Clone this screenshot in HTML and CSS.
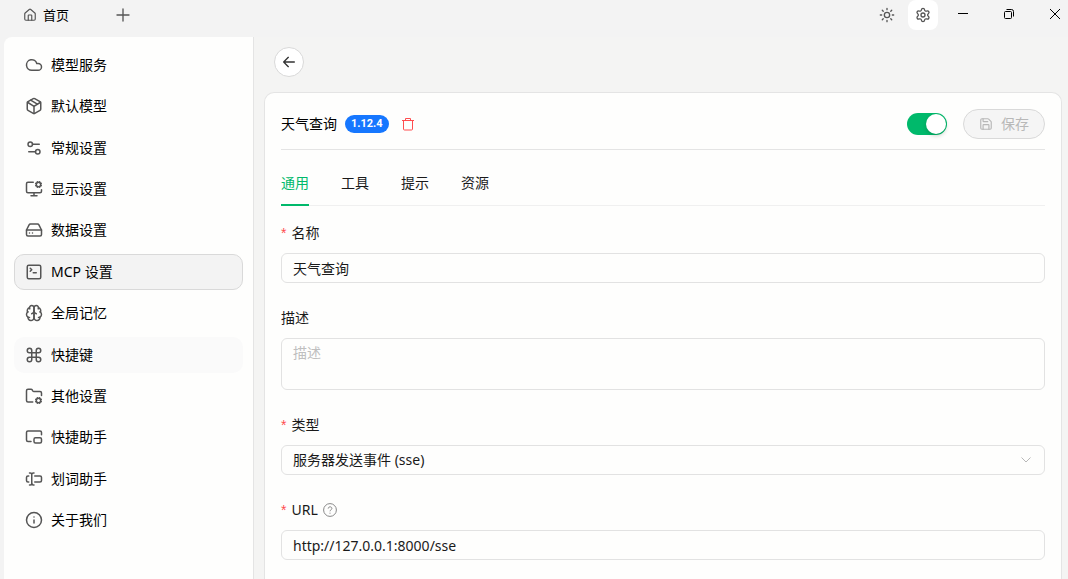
FILE: index.html
```html
<!DOCTYPE html>
<html lang="zh-CN">
<head>
    <meta charset="UTF-8">
    <meta name="viewport" content="width=device-width, initial-scale=1.0">
    <title>MCP 设置</title>
    <link rel="stylesheet" href="styles.css">
</head>
<body>
    <header class="titlebar">
        <a class="home-tab" href="#">
            <svg class="icon icon-sm" viewBox="0 0 24 24"><path d="M15 21v-8a1 1 0 0 0-1-1h-4a1 1 0 0 0-1 1v8"/><path d="M3 10a2 2 0 0 1 .709-1.528l7-5.999a2 2 0 0 1 2.582 0l7 5.999A2 2 0 0 1 21 10v9a2 2 0 0 1-2 2H5a2 2 0 0 1-2-2z"/></svg>
            首页
        </a>
        <button class="add-tab" type="button" aria-label="新建标签">
            <svg class="icon" viewBox="0 0 24 24"><path d="M3 12h18M12 3v18"/></svg>
        </button>
        <div class="tools">
            <button class="tool" type="button" aria-label="主题">
                <svg class="icon" viewBox="0 0 24 24"><circle cx="12" cy="12" r="4"/><path d="M12 2v2M12 20v2M4.93 4.93l1.41 1.41M17.66 17.66l1.41 1.41M2 12h2M20 12h2M6.34 17.66l-1.41 1.41M19.07 4.93l-1.41 1.41"/></svg>
            </button>
            <button class="tool active" type="button" aria-label="设置">
                <svg class="icon" viewBox="0 0 24 24"><path d="M9.671 4.136a2.34 2.34 0 0 1 4.659 0 2.34 2.34 0 0 0 3.319 1.915 2.34 2.34 0 0 1 2.33 4.033 2.34 2.34 0 0 0 0 3.831 2.34 2.34 0 0 1-2.33 4.033 2.34 2.34 0 0 0-3.319 1.915 2.34 2.34 0 0 1-4.659 0 2.34 2.34 0 0 0-3.32-1.915 2.34 2.34 0 0 1-2.33-4.033 2.34 2.34 0 0 0 0-3.831A2.34 2.34 0 0 1 6.35 6.051a2.34 2.34 0 0 0 3.319-1.915"/><circle cx="12" cy="12" r="3"/></svg>
            </button>
        </div>
        <div class="window-controls">
            <button type="button" aria-label="最小化"><svg viewBox="0 0 12 12"><path d="M1 5.5h10"/></svg></button>
            <button type="button" aria-label="还原"><svg viewBox="0 0 12 12"><rect x="1.5" y="3.5" width="7" height="7" rx="1"/><path d="M3.5 1.5h5a2 2 0 0 1 2 2v5"/></svg></button>
            <button type="button" aria-label="关闭"><svg viewBox="0 0 12 12"><path d="M1 1l10 10M11 1L1 11"/></svg></button>
        </div>
    </header>

    <div class="layout">
        <nav class="sidebar">
            <ul class="menu">
                <li><a class="menu-item" href="#">
                    <svg class="icon" viewBox="0 0 24 24"><path d="M17.5 19H9a7 7 0 1 1 6.71-9h1.79a4.5 4.5 0 1 1 0 9Z"/></svg>
                    模型服务</a></li>
                <li><a class="menu-item" href="#">
                    <svg class="icon" viewBox="0 0 24 24"><path d="M11 21.73a2 2 0 0 0 2 0l7-4A2 2 0 0 0 21 16V8a2 2 0 0 0-1-1.73l-7-4a2 2 0 0 0-2 0l-7 4A2 2 0 0 0 3 8v8a2 2 0 0 0 1 1.73z"/><path d="M12 22V12"/><path d="m3.3 7 7.703 4.734a2 2 0 0 0 1.994 0L20.7 7"/><path d="m7.5 4.27 9 5.15"/></svg>
                    默认模型</a></li>
                <li><a class="menu-item" href="#">
                    <svg class="icon" viewBox="0 0 24 24"><path d="M14 17H5M19 7h-9"/><circle cx="17" cy="17" r="3"/><circle cx="7" cy="7" r="3"/></svg>
                    常规设置</a></li>
                <li><a class="menu-item" href="#">
                    <svg class="icon" viewBox="0 0 24 24"><path d="M12 17v4M8 21h8"/><path d="m14.305 7.53.923-.382M15.228 4.852l-.923-.383M16.852 3.228l-.383-.924M16.852 8.772l-.383.923M19.148 3.228l.383-.924M19.53 9.696l-.382-.924M20.772 4.852l.924-.383M20.772 7.148l.924.383"/><path d="M22 13v2a2 2 0 0 1-2 2H4a2 2 0 0 1-2-2V5a2 2 0 0 1 2-2h7"/><circle cx="18" cy="6" r="3"/></svg>
                    显示设置</a></li>
                <li><a class="menu-item" href="#">
                    <svg class="icon" viewBox="0 0 24 24"><path d="M22 12H2"/><path d="M5.45 5.11 2 12v6a2 2 0 0 0 2 2h16a2 2 0 0 0 2-2v-6l-3.45-6.89A2 2 0 0 0 16.76 4H7.24a2 2 0 0 0-1.79 1.11z"/><path d="M6 16h.01M10 16h.01"/></svg>
                    数据设置</a></li>
                <li><a class="menu-item active" href="#">
                    <svg class="icon" viewBox="0 0 24 24"><path d="m7 11 2-2-2-2M11 13h4"/><rect x="3" y="3" width="18" height="18" rx="2"/></svg>
                    MCP 设置</a></li>
                <li><a class="menu-item" href="#">
                    <svg class="icon" viewBox="0 0 24 24"><path d="M12 5a3 3 0 1 0-5.997.125 4 4 0 0 0-2.526 5.77 4 4 0 0 0 .556 6.588A4 4 0 1 0 12 18Z"/><path d="M12 5a3 3 0 1 1 5.997.125 4 4 0 0 1 2.526 5.77 4 4 0 0 1-.556 6.588A4 4 0 1 1 12 18Z"/><path d="M15 13a4.5 4.5 0 0 1-3-4 4.5 4.5 0 0 1-3 4"/><path d="M17.599 6.5a3 3 0 0 0 .399-1.375M6.003 5.125A3 3 0 0 0 6.401 6.5M3.477 10.896a4 4 0 0 1 .585-.396M19.938 10.5a4 4 0 0 1 .585.396M6 18a4 4 0 0 1-1.967-.516M19.967 17.484A4 4 0 0 1 18 18"/></svg>
                    全局记忆</a></li>
                <li><a class="menu-item hover" href="#">
                    <svg class="icon" viewBox="0 0 24 24"><path d="M15 6v12a3 3 0 1 0 3-3H6a3 3 0 1 0 3 3V6a3 3 0 1 0-3 3h12a3 3 0 1 0-3-3"/></svg>
                    快捷键</a></li>
                <li><a class="menu-item" href="#">
                    <svg class="icon" viewBox="0 0 24 24"><path d="M10.3 20H4a2 2 0 0 1-2-2V5a2 2 0 0 1 2-2h3.98a2 2 0 0 1 1.69.9l.66 1.2A2 2 0 0 0 12 6h8a2 2 0 0 1 2 2v3.3"/><path d="m14.305 19.53.923-.382M15.228 16.852l-.923-.383M16.852 15.228l-.383-.923M16.852 20.772l-.383.924M19.148 15.228l.383-.923M19.53 21.696l-.382-.924M20.772 16.852l.924-.383M20.772 19.148l.924.383"/><circle cx="18" cy="18" r="3"/></svg>
                    其他设置</a></li>
                <li><a class="menu-item" href="#">
                    <svg class="icon" viewBox="0 0 24 24"><path d="M22 9V6a2 2 0 0 0-2-2H4a2 2 0 0 0-2 2v10c0 1.1.9 2 2 2h4"/><rect x="12" y="13" width="10" height="7" rx="2"/></svg>
                    快捷助手</a></li>
                <li><a class="menu-item" href="#">
                    <svg class="icon" viewBox="0 0 24 24"><path d="M12 20h-1a2 2 0 0 1-2-2 2 2 0 0 1-2 2H6"/><path d="M13 8h7a2 2 0 0 1 2 2v4a2 2 0 0 1-2 2h-7"/><path d="M5 16H4a2 2 0 0 1-2-2v-4a2 2 0 0 1 2-2h1"/><path d="M6 4h1a2 2 0 0 1 2 2 2 2 0 0 1 2-2h1M9 6v12"/></svg>
                    划词助手</a></li>
                <li><a class="menu-item" href="#">
                    <svg class="icon" viewBox="0 0 24 24"><circle cx="12" cy="12" r="10"/><path d="M12 16v-4M12 8h.01"/></svg>
                    关于我们</a></li>
            </ul>
        </nav>

        <main class="content">
            <button class="back-btn" type="button" aria-label="返回">
                <svg class="icon" viewBox="0 0 24 24"><path d="m11 19-7-7 7-7M20 12H4"/></svg>
            </button>

            <section class="card">
                <div class="card-header">
                    <span class="server-name">天气查询</span>
                    <span class="version">1.12.4</span>
                    <button class="delete-btn" type="button" aria-label="删除">
                        <svg viewBox="0 0 14 14"><path d="M1 3.5h12M4.5 3.5v-2h5v2M2.5 3.500v8.500a1 1 0 0 0 1 1h7a1 1 0 0 0 1-1v-8.500"/></svg>
                    </button>
                    <div class="header-actions">
                        <input class="switch" type="checkbox" aria-label="启用" checked>
                        <button class="save-btn" type="button" disabled>
                            <svg class="icon icon-sm" viewBox="0 0 24 24"><path d="M15.2 3a2 2 0 0 1 1.4.6l3.8 3.8a2 2 0 0 1 .6 1.4V19a2 2 0 0 1-2 2H5a2 2 0 0 1-2-2V5a2 2 0 0 1 2-2z"/><path d="M17 21v-7a1 1 0 0 0-1-1H8a1 1 0 0 0-1 1v7M7 3v4a1 1 0 0 0 1 1h7"/></svg>
                            保存
                        </button>
                    </div>
                </div>

                <div class="tabs" role="tablist">
                    <button class="tab active" type="button" role="tab" aria-selected="true">通用</button>
                    <button class="tab" type="button" role="tab">工具</button>
                    <button class="tab" type="button" role="tab">提示</button>
                    <button class="tab" type="button" role="tab">资源</button>
                </div>

                <form class="form">
                    <div class="form-item">
                        <label class="required" for="name">名称</label>
                        <input class="field" type="text" id="name" value="天气查询">
                    </div>
                    <div class="form-item">
                        <label for="description">描述</label>
                        <textarea class="field" id="description" placeholder="描述"></textarea>
                    </div>
                    <div class="form-item">
                        <label class="required" for="type">类型</label>
                        <div class="select-wrap">
                            <select class="field" id="type">
                                <option>服务器发送事件 (sse)</option>
                            </select>
                            <svg class="chevron" viewBox="0 0 12 12"><path d="M1.5 3.5 6 8l4.500-4.500"/></svg>
                        </div>
                    </div>
                    <div class="form-item">
                        <label class="required" for="url">URL
                            <svg class="help" viewBox="0 0 14 14"><circle cx="7" cy="7" r="6.4"/><path d="M5.2 5.6c0-2.4 3.7-2.3 3.7-.1C8.9 6.8 7 6.8 7 8.3M7 9.7v1"/></svg>
                        </label>
                        <input class="field" type="text" id="url" value="http://127.0.0.1:8000/sse">
                    </div>
                </form>
            </section>
        </main>
    </div>
</body>
</html>
```
FILE: styles.css
```css
* {
    box-sizing: border-box;
}
body {
    margin: 0;
    height: 100vh;
    display: flex;
    flex-direction: column;
    overflow: hidden;
    background-color: #f3f3f3;
    color: #1a1a1a;
    font-family: "Noto Sans", "Noto Sans CJK SC", sans-serif;
    font-size: 14px;
    line-height: 22px;
}
button, input, select, textarea {
    font: inherit;
    color: inherit;
}
button {
    padding: 0;
    border: none;
    background: none;
    display: flex;
    align-items: center;
    justify-content: center;
}
a {
    color: inherit;
    text-decoration: none;
}
svg {
    flex-shrink: 0;
    fill: none;
    stroke: currentColor;
}
.icon {
    width: 16px;
    height: 16px;
    color: #555;
    stroke-width: 2;
    stroke-linecap: round;
    stroke-linejoin: round;
}
.icon-sm {
    width: 14px;
    height: 14px;
}

/* title bar */
.titlebar {
    height: 37px;
    padding-left: 23px;
    display: flex;
    align-items: flex-start;
    flex-shrink: 0;
}
.home-tab {
    height: 30px;
    display: flex;
    align-items: center;
    gap: 6px;
    color: #000;
    font-size: 13px;
}
.add-tab {
    width: 30px;
    height: 30px;
    margin-left: 39px;
}
.tools {
    display: flex;
    gap: 6px;
    margin-left: auto;
}
.tool {
    width: 30px;
    height: 30px;
    border-radius: 8px;
}
.tool.active {
    background-color: #fff;
}
.window-controls {
    display: flex;
    gap: 20px;
    margin-left: 12px;
}
.window-controls button {
    width: 26px;
    height: 28px;
    color: #000;
}
.window-controls svg {
    width: 12px;
    height: 12px;
}

/* sidebar */
.layout {
    flex: 1;
    display: flex;
    min-height: 0;
    padding-left: 4px;
}
.sidebar {
    width: 250px;
    flex-shrink: 0;
    padding: 10px;
    background-color: #fefefd;
    border-right: 1px solid #e4e4e4;
    border-top-left-radius: 8px;
}
.menu {
    height: 491px;
    margin: 0;
    padding: 0;
    list-style: none;
    display: flex;
    flex-direction: column;
    justify-content: space-between;
}
.menu-item {
    height: 36px;
    padding: 0 10px;
    display: flex;
    align-items: center;
    gap: 8px;
    border: 1px solid transparent;
    border-radius: 10px;
    color: #000;
}
.menu-item .icon {
    width: 18px;
    height: 18px;
}
.menu-item.active {
    background-color: #f3f3f3;
    border-color: #d9d9d9;
}
.menu-item.hover {
    background-color: #fafafa;
}

/* content */
.content {
    flex: 1;
    min-width: 0;
    display: flex;
    flex-direction: column;
    padding: 10px 6px 0 10px;
    background-color: #f4f4f3;
}
.back-btn {
    width: 30px;
    height: 30px;
    margin: 0 0 15px 10px;
    border: 1px solid #d9d9d9;
    border-radius: 50%;
    background-color: #fff;
}
.back-btn .icon {
    color: #333;
}
.card {
    flex: 1;
    padding: 16px;
    background-color: #fefefd;
    border: 1px solid #e4e4e4;
    border-bottom: none;
    border-radius: 10px 10px 0 0;
}
.card-header {
    display: flex;
    align-items: center;
    padding-bottom: 10px;
    border-bottom: 1px solid #e4e4e4;
}
.server-name {
    color: #000;
}
.version {
    margin-left: 8px;
    padding: 0 6px;
    border-radius: 9px;
    background-color: #1677ff;
    color: #fff;
    font-family: Roboto, "Liberation Sans", sans-serif;
    font-size: 11px;
    font-weight: bold;
    line-height: 18px;
}
.delete-btn {
    margin-left: 12px;
    color: #ff4d4f;
}
.delete-btn svg {
    width: 14px;
    height: 14px;
}
.header-actions {
    margin-left: auto;
    display: flex;
    align-items: center;
    gap: 16px;
}
.switch {
    appearance: none;
    width: 40px;
    height: 22px;
    margin: 0;
    padding: 1px;
    display: flex;
    justify-content: flex-end;
    border-radius: 11px;
    background-color: #00b96b;
}
.switch::before {
    content: "";
    width: 20px;
    height: 20px;
    border-radius: 50%;
    background-color: #fff;
    box-shadow: 0 2px 4px rgba(0, 35, 11, 0.2);
}
.save-btn {
    width: 82px;
    height: 30px;
    gap: 8px;
    border: 1px solid #d9d9d9;
    border-radius: 15px;
    background-color: #f5f5f5;
    color: #b8b8b8;
}
.save-btn .icon {
    color: #b8b8b8;
}

/* tabs */
.tabs {
    display: flex;
    gap: 32px;
    height: 46px;
    margin: 10px 0 16px;
    box-shadow: inset 0 -1px #f0f0f0;
}
.tab.active {
    color: #00b96b;
    box-shadow: inset 0 -2px #00b96b;
}

/* form */
.form {
    display: flex;
    flex-direction: column;
    gap: 24px;
}
.form-item {
    display: flex;
    flex-direction: column;
    gap: 9px;
}
.form-item label {
    display: flex;
    align-items: center;
    gap: 5px;
}
.required::before {
    content: "*";
    color: #ff4d4f;
    font-family: "Liberation Sans", sans-serif;
}
.field {
    display: block;
    width: 100%;
    height: 30px;
    margin: 0;
    padding: 0 11px;
    border: 1px solid #e2e2e2;
    border-radius: 6px;
    background-color: #fefefd;
    outline: none;
}
textarea.field {
    height: 52px;
    padding: 3px 11px;
    resize: none;
}
.field::placeholder {
    color: #bfbfbf;
}
.select-wrap {
    position: relative;
}
select.field {
    appearance: none;
}
.chevron {
    position: absolute;
    top: 9px;
    right: 13px;
    width: 12px;
    height: 12px;
    color: #b8b8b8;
    pointer-events: none;
}
.help {
    width: 14px;
    height: 14px;
    color: #888;
}
```
